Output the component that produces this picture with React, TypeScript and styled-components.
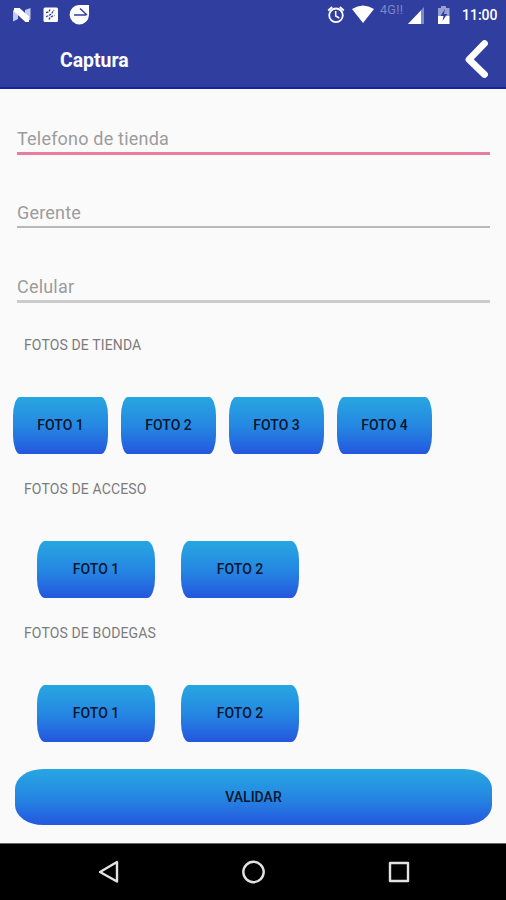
import React from 'react';
import styled, { createGlobalStyle } from 'styled-components';

const GlobalStyle = createGlobalStyle`
  *, *::before, *::after { box-sizing: border-box; }
  body { margin: 0; background: #fafafa; font-family: Roboto, "Liberation Sans", sans-serif; }
`;

const Screen = styled.div`
  display: flex;
  flex-direction: column;
  width: 506px;
  height: 900px;
  overflow: hidden;
  background: #fafafa;
`;

const TopBar = styled.header`
  height: 89px;
  flex: none;
  background: #303f9f;
  border-bottom: 2px solid #17259a;
  color: #fff;
`;

const StatusBar = styled.div`
  display: flex;
  justify-content: space-between;
  height: 30px;
`;

const StatusIcons = styled.svg`
  display: block;
  height: 30px;
`;

const StatusRight = styled.div`
  display: flex;
  padding-right: 9px;
`;

const Network = styled.span`
  width: 28px;
  padding-top: 3px;
  font-size: 12.5px;
  line-height: 14px;
  letter-spacing: 0.3px;
  color: #7d86c6;
`;

const Clock = styled.time`
  width: 35px;
  font-size: 14px;
  font-weight: 500;
  line-height: 31px;
  white-space: nowrap;
`;

const TitleBar = styled.div`
  display: flex;
  align-items: center;
  justify-content: space-between;
  height: 57px;
  padding: 1px 16px 0 60px;
`;

const Title = styled.h1`
  margin: 0;
  padding-top: 3px;
  font-size: 19.4px;
  font-weight: 700;
  line-height: 24px;
`;

const BackButton = styled.button`
  display: block;
  padding: 0;
  border: 0;
  background: none;
  svg { display: block; }
`;

const Content = styled.main`
  flex: 1;
  min-height: 0;
`;

const Fields = styled.div`
  height: 243px;
  padding: 31px 16px 0 17px;
`;

const Field = styled.label<{ $active?: boolean }>`
  display: flex;
  flex-direction: column;
  height: 74px;
  padding-top: 7px;
  font-size: 18px;
  line-height: 24px;
  letter-spacing: 0.2px;
  color: #9c9c9c;

  &::after {
    content: '';
    height: ${(p) => (p.$active ? 3 : 2)}px;
    margin-top: 1px;
    background: ${(p) => (p.$active ? '#e77d9f' : '#b9b9b9')};
  }

  &:last-child::after {
    height: 3px;
    background: #cbcbcb;
  }
`;

const Section = styled.section`
  height: 144px;
`;

const SectionTitle = styled.h2`
  margin: 0;
  padding: 4px 0 0 24px;
  height: 65px;
  font-size: 14px;
  font-weight: 400;
  line-height: 18px;
  letter-spacing: 0.13px;
  color: #7c7c7c;
`;

const Photos = styled.div<{ $wide?: boolean }>`
  display: flex;
  gap: ${(p) => (p.$wide ? 26 : 13)}px;
  padding-left: ${(p) => (p.$wide ? 37 : 13)}px;
`;

const GradientButton = styled.button`
  padding: 0;
  border: 0;
  height: 56.5px;
  background: linear-gradient(#28a6e1, #2588e2 50%, #2457de);
  color: #07152e;
  font-family: inherit;
  font-size: 14px;
  font-weight: 500;
  line-height: 18px;
`;

const PhotoButton = styled(GradientButton)<{ $wide?: boolean }>`
  width: ${(p) => (p.$wide ? 118 : 95)}px;
  border-radius: ${(p) => (p.$wide ? '8px / 19px' : '7px / 19px')};
`;

const SubmitButton = styled(GradientButton)`
  display: block;
  width: 477px;
  height: 56px;
  margin: 5px 0 0 15px;
  border-radius: 28px / 20px;
`;

const NavBar = styled.nav`
  flex: none;
  height: 57px;
  background: #000;
  border-top: 1px solid #666;
  svg { display: block; }
`;

function NotificationIcons() {
  return (
    <StatusIcons width="110" viewBox="0 0 110 30">
      <path d="M13 10.5l5-2.5v11l-5 2.5z" fill="#c5cbed" />
      <path d="M25 10l5.5-2v11.500l-5.500 2.500z" fill="#c5cbed" />
      <path d="M14 8h5.500l9.500 8.500v5.500h-3.500L14 11.500z" fill="#fff" />
      <rect x="43.5" y="7.5" width="14.5" height="14.5" rx="1.5" fill="#fff" />
      <path d="M46 12.500q3 0 4-3M46 16.500q5-1 8-6.500M49 19.500q1-3 5.500-4" fill="none" stroke="#303f9f" strokeWidth="1.3" strokeDasharray="2.4 .9" />
      <path d="M79 5h10v10a9.700 9.700 0 1 1-10-10z" fill="#fff" />
      <path d="M74 15h12M80 8.500l7 6.500" fill="none" stroke="#303f9f" strokeWidth="1.5" />
    </StatusIcons>
  );
}

function AlarmAndWifi() {
  return (
    <StatusIcons width="54" viewBox="326 0 54 30">
      <g fill="none" stroke="#fff" strokeWidth="1.8">
        <circle cx="336" cy="15.3" r="6.8" />
        <path d="M328.2 10.5l4-3.5M343.8 10.5l-4-3.5" />
        <path d="M335.7 11v5l3.600 2" strokeWidth="1.5" />
      </g>
      <path d="M352 9q11-7 22 0l-11 14z" fill="#fff" />
    </StatusIcons>
  );
}

function SignalAndBattery() {
  return (
    <StatusIcons width="54" viewBox="408 0 54 30">
      <path d="M408 24l16-17v17z" fill="#7f89c7" />
      <path d="M408 24l13-13.5V24z" fill="#fff" />
      <path d="M438 8h3V6h5v2h3.500v8H438z" fill="#98a0d2" />
      <path d="M438 16h11.500v8H438z" fill="#fff" />
      <path d="M445 9l-4.500 7h3l-1 5 4.800-7H444z" fill="#303f9f" />
    </StatusIcons>
  );
}

const storePhotos = ['FOTO 1', 'FOTO 2', 'FOTO 3', 'FOTO 4'];
const pairPhotos = ['FOTO 1', 'FOTO 2'];

interface PhotoSectionProps {
  title: string;
  photos: string[];
  wide?: boolean;
}

function PhotoSection({ title, photos, wide }: PhotoSectionProps) {
  return (
    <Section>
      <SectionTitle>{title}</SectionTitle>
      <Photos $wide={wide}>
        {photos.map((name) => (
          <PhotoButton key={name} $wide={wide}>{name}</PhotoButton>
        ))}
      </Photos>
    </Section>
  );
}

export default function App() {
  return (
    <>
      <GlobalStyle />
      <Screen>
        <TopBar>
          <StatusBar>
            <NotificationIcons />
            <StatusRight>
              <AlarmAndWifi />
              <Network>4G!!</Network>
              <SignalAndBattery />
              <Clock>11:00</Clock>
            </StatusRight>
          </StatusBar>
          <TitleBar>
            <Title>Captura</Title>
            <BackButton aria-label="Volver">
              <svg width="26" height="40" viewBox="0 0 26 40">
                <path d="M20.5 4.5L5 20.5l15.500 15" fill="none" stroke="#fff" strokeWidth="6.8" strokeLinecap="round" strokeLinejoin="round" />
              </svg>
            </BackButton>
          </TitleBar>
        </TopBar>
        <Content>
          <Fields>
            <Field $active>Telefono de tienda</Field>
            <Field>Gerente</Field>
            <Field>Celular</Field>
          </Fields>
          <PhotoSection title="FOTOS DE TIENDA" photos={storePhotos} />
          <PhotoSection title="FOTOS DE ACCESO" photos={pairPhotos} wide />
          <PhotoSection title="FOTOS DE BODEGAS" photos={pairPhotos} wide />
          <SubmitButton>VALIDAR</SubmitButton>
        </Content>
        <NavBar>
          <svg width="506" height="56" viewBox="0 844 506 56">
            <g fill="none" stroke="#e2e2e2" strokeWidth="2.4" strokeLinejoin="round">
              <path d="M117 862v19.500L100 872z" />
              <circle cx="253.5" cy="872" r="10.2" />
              <rect x="390" y="863" width="18" height="18" />
            </g>
          </svg>
        </NavBar>
      </Screen>
    </>
  );
}
